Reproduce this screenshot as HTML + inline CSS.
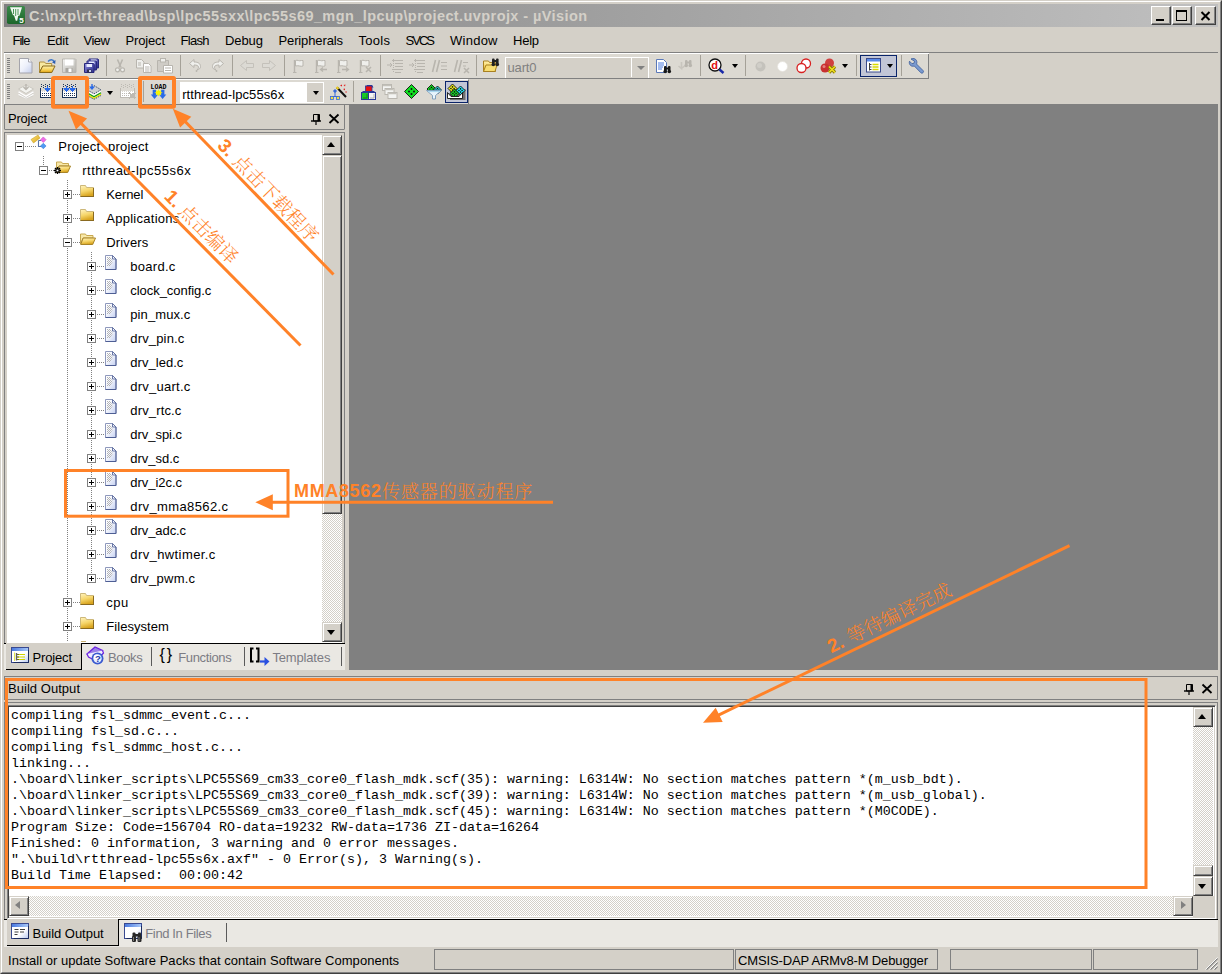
<!DOCTYPE html>
<html lang="en">
<head>
<meta charset="utf-8">
<title>µVision</title>
<style>
*{box-sizing:border-box;margin:0;padding:0}
html,body{width:1222px;height:974px;overflow:hidden;background:#d4d0c8}
body{position:relative;font-family:"Liberation Sans","Noto Sans CJK SC",sans-serif;font-size:13px;color:#000}
.abs,.t,.i{position:absolute}
.t{line-height:16px;white-space:nowrap}
svg{position:absolute;overflow:visible}
.vsep{position:absolute;width:1px;background:#a5a198}
.grip{position:absolute;width:3px;height:15px;background:repeating-linear-gradient(to bottom,#808080 0,#808080 1px,#dcd9d2 1px,#dcd9d2 2px)}
.btn{position:absolute;background:#d4d0c8;border-style:solid;border-width:1px;border-color:#fff #404040 #404040 #fff;box-shadow:inset -1px -1px 0 #808080}
.sbtn{position:absolute;background:#d4d0c8;border-style:solid;border-width:1px;border-color:#d4d0c8 #404040 #404040 #d4d0c8;box-shadow:inset 1px 1px 0 #fff, inset -1px -1px 0 #808080}
.checker{position:absolute;background-color:#fff;background-image:linear-gradient(45deg,#d4d0c8 25%,transparent 25%,transparent 75%,#d4d0c8 75%),linear-gradient(45deg,#d4d0c8 25%,transparent 25%,transparent 75%,#d4d0c8 75%);background-size:2px 2px;background-position:0 0,1px 1px}
.sunk{position:absolute;background:#fff;border-style:solid;border-width:1px;border-color:#808080 #fff #fff #808080;box-shadow:inset 1px 1px 0 #404040, inset -1px -1px 0 #d4d0c8}
.hdr{position:absolute;border:1px solid #808080}
.dotv{position:absolute;width:1px;background:repeating-linear-gradient(to bottom,#808080 0,#808080 1px,#fff 1px,#fff 2px)}
.doth{position:absolute;height:1px;background:repeating-linear-gradient(to right,#808080 0,#808080 1px,#fff 1px,#fff 2px)}
.xb{position:absolute;width:9px;height:9px;border:1px solid #808080;background:#fff}
.xb:before{content:"";position:absolute;left:1px;top:3px;width:5px;height:1px;background:#000}
.xb.p:after{content:"";position:absolute;left:3px;top:1px;width:1px;height:5px;background:#000}
.tabbar{position:absolute;background:#eae8e3}
.atab{position:absolute;background:#d4d0c8;border-right:1px solid #000;border-bottom:1px solid #000}
pre{position:absolute;font-family:"Liberation Mono",monospace;font-size:13.33px;line-height:16px;color:#000;white-space:pre}
.sbox{position:absolute;top:949px;height:21px;border:1px solid #808080}
.cn{font-family:"Noto Serif CJK SC","Noto Sans CJK SC",serif;font-weight:normal}
</style>
</head>
<body>

<div class="abs" style="left:0;top:0;width:1222px;height:974px;border-style:solid;border-width:1px;border-color:#d4d0c8 #404040 #404040 #d4d0c8"></div>
<div class="abs" style="left:1px;top:1px;width:1220px;height:972px;border-style:solid;border-width:1px;border-color:#fff #808080 #808080 #fff"></div>
<div class="abs" style="left:4px;top:4px;width:1214px;height:23px;background:linear-gradient(to right,#808080 0%,#c0c0c0 100%)">
<svg style="left:3px;top:2px" width="18" height="18" viewBox="0 0 18 18">
<defs><linearGradient id="kg" x1="0" y1="0" x2="0" y2="1"><stop offset="0" stop-color="#3c8a4a"/><stop offset="1" stop-color="#1c662a"/></linearGradient></defs>
<rect x="0" y="0" width="18" height="18" rx="1.8" fill="url(#kg)"/>
<path d="M3 1.3h12l-2.6 8.5h-1.2l-1 5h-1.4l-1.8-5.5h-1z" fill="#f2f8f2"/>
<path d="M6.5 3v5M8.7 3v7M11 3v6" stroke="#4a9858" stroke-width="1"/>
<text x="12.3" y="16.6" font-size="8" font-weight="bold" fill="#fff" font-family="Liberation Sans,sans-serif">5</text>
</svg>
<span class="t" style="left:25px;top:3.5px;font-size:14.5px;letter-spacing:0.414px;color:#d4d0c8;font-weight:bold;">C:\nxp\rt-thread\bsp\lpc55sxx\lpc55s69_mgn_lpcup\project.uvprojx - µVision</span>
<div class="btn" style="left:1147px;top:2px;width:20px;height:19px"><div class="abs" style="left:4px;top:12px;width:8px;height:2px;background:#000"></div></div>
<div class="btn" style="left:1168px;top:2px;width:20px;height:19px"><div class="abs" style="left:3px;top:3px;width:11px;height:11px;border:1px solid #000;border-top-width:2px"></div></div>
<div class="btn" style="left:1191px;top:2px;width:21px;height:19px"><svg style="left:4px;top:4px" width="11" height="10" viewBox="0 0 11 10"><path d="M1.5 1l8 8M9.5 1l-8 8" stroke="#000" stroke-width="2" fill="none"/></svg></div>
</div>
<span class="t" style="left:12.5px;top:33px;font-size:13px;letter-spacing:-0.982px;color:#000;">File</span>
<span class="t" style="left:47px;top:33px;font-size:13px;letter-spacing:-0.3px;color:#000;">Edit</span>
<span class="t" style="left:83.5px;top:33px;font-size:13px;letter-spacing:-0.481px;color:#000;">View</span>
<span class="t" style="left:125.5px;top:33px;font-size:13px;letter-spacing:-0.16px;color:#000;">Project</span>
<span class="t" style="left:180.5px;top:33px;font-size:13px;letter-spacing:-0.697px;color:#000;">Flash</span>
<span class="t" style="left:225px;top:33px;font-size:13px;letter-spacing:-0.076px;color:#000;">Debug</span>
<span class="t" style="left:278.5px;top:33px;font-size:13px;letter-spacing:-0.125px;color:#000;">Peripherals</span>
<span class="t" style="left:358.5px;top:33px;font-size:13px;letter-spacing:0.288px;color:#000;">Tools</span>
<span class="t" style="left:405.5px;top:33px;font-size:13px;letter-spacing:-1.968px;color:#000;">SVCS</span>
<span class="t" style="left:450px;top:33px;font-size:13px;letter-spacing:0.253px;color:#000;">Window</span>
<span class="t" style="left:513px;top:33px;font-size:13px;letter-spacing:-0.245px;color:#000;">Help</span>
<div class="abs" style="left:4px;top:52px;width:1214px;height:1px;background:#808080"></div>
<div class="abs" style="left:4px;top:53px;width:925px;height:1px;background:#fff"></div>
<div class="abs" style="left:4px;top:54px;width:925px;height:25px;background:#dcd9d2;border-right:1px solid #808080;border-bottom:1px solid #808080;border-left:1px solid #fff"></div>
<div class="abs" style="left:4px;top:79px;width:465px;height:25px;background:#dcd9d2;border-top:1px solid #fff;border-left:1px solid #fff;border-right:1px solid #808080"></div>
<div class="abs" style="left:4px;top:104px;width:1214px;height:1px;background:#808080"></div>
<div class="grip" style="left:7px;top:58px"></div><div class="grip" style="left:7px;top:84px"></div>
<div class="vsep" style="left:106px;top:55px;height:21px"></div>
<div class="vsep" style="left:180px;top:55px;height:21px"></div>
<div class="vsep" style="left:232px;top:55px;height:21px"></div>
<div class="vsep" style="left:284px;top:55px;height:21px"></div>
<div class="vsep" style="left:380px;top:55px;height:21px"></div>
<div class="vsep" style="left:476px;top:55px;height:21px"></div>
<div class="vsep" style="left:700px;top:55px;height:21px"></div>
<div class="vsep" style="left:745px;top:55px;height:21px"></div>
<div class="vsep" style="left:856px;top:55px;height:21px"></div>
<div class="vsep" style="left:901px;top:55px;height:21px"></div>
<div class="vsep" style="left:143px;top:81px;height:21px"></div>
<div class="vsep" style="left:353px;top:81px;height:21px"></div>
<svg width="0" height="0" style="left:0;top:0"><defs><linearGradient id="g_doc" x1="0" y1="0" x2="1" y2="1"><stop offset="0" stop-color="#fff"/><stop offset="0.5" stop-color="#eef1fb"/><stop offset="1" stop-color="#c3cdec"/></linearGradient><linearGradient id="g_fold" x1="0" y1="0" x2="0" y2="1"><stop offset="0" stop-color="#fff2b0"/><stop offset="0.6" stop-color="#f5cf55"/><stop offset="1" stop-color="#e0a010"/></linearGradient><linearGradient id="g_flop" x1="0" y1="0" x2="1" y2="1"><stop offset="0" stop-color="#8f8fe0"/><stop offset="1" stop-color="#2a2a8a"/></linearGradient><linearGradient id="g_gray" x1="0" y1="0" x2="1" y2="1"><stop offset="0" stop-color="#f4f4f2"/><stop offset="1" stop-color="#b4b2ac"/></linearGradient></defs></svg>
<svg style="left:19px;top:58px" width="14" height="16" viewBox="0 0 14 16" ><path d="M0.5 0.5h9l3.5 3.5v11h-12.5z" fill="url(#g_doc)" stroke="#a4a4ac"/><path d="M9.5 0.5v3.5h3.5" fill="#fff" stroke="#a4a4ac"/></svg>
<svg style="left:39px;top:58px" width="17" height="16" viewBox="0 0 17 16" ><path d="M0.5 4h5l1.2 1.5h6v3h-9l-3.2 5.5z" fill="#f8e9a0" stroke="#b09040"/><path d="M3.8 8h12.2l-3.2 6.5h-12.3z" fill="url(#g_fold)" stroke="#8a6a18"/><path d="M9 3.5c2-2.5 5-2.5 6.5 0.5" fill="none" stroke="#3f78c8" stroke-width="1.4"/><path d="M16.5 2l-0.3 4-3.2-1.8z" fill="#2a5cb0"/></svg>
<svg style="left:62px;top:58px" width="15" height="16" viewBox="0 0 15 16" ><path d="M0.5 1h13l0.5 0.5v13h-13.5z" fill="url(#g_gray)" stroke="#b8b6b0"/><rect x="3" y="1.5" width="8.5" height="6" fill="#fff"/><rect x="3.5" y="10" width="7" height="4.5" fill="#a8a6a0"/><rect x="6.5" y="10.5" width="3" height="3.5" fill="#fff"/></svg>
<svg style="left:84px;top:58px" width="15" height="16" viewBox="0 0 15 16" ><g transform="translate(4.5,0.5)"><path d="M0.5 0.5h9l0.5 0.5v8.5h-9.5z" fill="url(#g_flop)" stroke="#28287c"/><rect x="2.5" y="1" width="5.5" height="3" fill="#e8ecff"/><rect x="3" y="6.5" width="4.5" height="3" fill="#303050"/><rect x="5" y="7" width="2" height="2" fill="#c8d0f0"/></g><g transform="translate(2.5,2.5)"><path d="M0.5 0.5h9l0.5 0.5v8.5h-9.5z" fill="url(#g_flop)" stroke="#28287c"/><rect x="2.5" y="1" width="5.5" height="3" fill="#e8ecff"/><rect x="3" y="6.5" width="4.5" height="3" fill="#303050"/><rect x="5" y="7" width="2" height="2" fill="#c8d0f0"/></g><g transform="translate(0,5)"><path d="M0.5 0.5h9l0.5 0.5v8.5h-9.5z" fill="url(#g_flop)" stroke="#28287c"/><rect x="2.5" y="1" width="5.5" height="3" fill="#e8ecff"/><rect x="3" y="6.5" width="4.5" height="3" fill="#303050"/><rect x="5" y="7" width="2" height="2" fill="#c8d0f0"/></g></svg>
<svg style="left:115px;top:59px" width="10" height="14" viewBox="0 0 10 14" ><path d="M2.5 0.5l3.5 8M7.5 0.5l-3.5 8" stroke="#b8b5ae" stroke-width="1.6" fill="none"/><circle cx="2.5" cy="10.8" r="2" fill="#efefec" stroke="#b8b5ae" stroke-width="1.2"/><circle cx="7.5" cy="10.8" r="2" fill="#efefec" stroke="#b8b5ae" stroke-width="1.2"/></svg>
<svg style="left:136px;top:59px" width="16" height="14" viewBox="0 0 16 14" ><path d="M0.5 0.5h5l2.5 2.5v6h-7.5z" fill="#efefec" stroke="#b8b5ae"/><path d="M7.5 4.5h5l2.5 2.5v6.5h-7.5z" fill="#ffffff" stroke="#b8b5ae"/><path d="M9 8h4.5M9 10h4.5M9 12h4.5M2 4h3M2 6h3" stroke="#b8b5ae"/></svg>
<svg style="left:157px;top:58px" width="16" height="16" viewBox="0 0 16 16" ><path d="M0.5 2.5h11v11h-11z" fill="#cfccc6" stroke="#b8b5ae"/><rect x="3.5" y="0.5" width="5" height="3.5" fill="#efefec" stroke="#b8b5ae"/><path d="M6.5 7.5h9v7.5h-9z" fill="#ffffff" stroke="#b8b5ae"/><path d="M8 10h6M8 12.5h6" stroke="#b8b5ae"/></svg>
<svg style="left:189px;top:59px" width="13" height="13" viewBox="0 0 13 13" ><path d="M0.5 4.5l4.5-4v2.5c4 0 6.5 1.5 6.5 4.5 0 2-1.5 3-3.5 3.5 1-0.8 1.5-1.8 1.5-2.8 0-1.7-2-2.2-4.5-2.2v2.5z" fill="#efefec" stroke="#b8b5ae"/><circle cx="7.5" cy="12" r="0.9" fill="#b8b5ae"/></svg>
<svg style="left:211px;top:59px" width="13" height="13" viewBox="0 0 13 13" ><path d="M12.5 4.5l-4.5-4v2.5c-4 0-6.5 1.5-6.5 4.5 0 2 1.5 3 3.5 3.5-1-0.8-1.5-1.8-1.5-2.8 0-1.7 2-2.2 4.5-2.2v2.5z" fill="#efefec" stroke="#b8b5ae"/><circle cx="5.5" cy="12" r="0.9" fill="#b8b5ae"/></svg>
<svg style="left:240px;top:60px" width="14" height="11" viewBox="0 0 14 11" ><path d="M0.5 5.5l6-5v3h7v4h-7v3z" fill="#dcdad4" stroke="#c4c1ba"/></svg>
<svg style="left:262px;top:60px" width="14" height="11" viewBox="0 0 14 11" ><path d="M13.5 5.5l-6-5v3h-7v4h7v3z" fill="#dcdad4" stroke="#c4c1ba"/></svg>
<svg style="left:291px;top:59px" width="16" height="14" viewBox="0 0 16 14" ><path d="M3.5 1v12" stroke="#b8b5ae" stroke-width="1.4"/><path d="M4.5 1.5c2-1 3.5 1 6 0l1.5 0v5.5c-2.5 1-4-1-7.5 0z" fill="#efefec" stroke="#b8b5ae"/><path d="M2 13.5h3.5" stroke="#b8b5ae"/></svg>
<svg style="left:313px;top:59px" width="16" height="14" viewBox="0 0 16 14" ><path d="M3.5 1v12" stroke="#b8b5ae" stroke-width="1.4"/><path d="M4.5 1.5c2-1 3.5 1 6 0l1.5 0v5.5c-2.5 1-4-1-7.5 0z" fill="#efefec" stroke="#b8b5ae"/><path d="M2 13.5h3.5" stroke="#b8b5ae"/><path d="M14 10.5h-6m2-2l-2.5 2 2.5 2" stroke="#b8b5ae" stroke-width="1.3" fill="none"/></svg>
<svg style="left:335px;top:59px" width="16" height="14" viewBox="0 0 16 14" ><path d="M3.5 1v12" stroke="#b8b5ae" stroke-width="1.4"/><path d="M4.5 1.5c2-1 3.5 1 6 0l1.5 0v5.5c-2.5 1-4-1-7.5 0z" fill="#efefec" stroke="#b8b5ae"/><path d="M2 13.5h3.5" stroke="#b8b5ae"/><path d="M7 10.5h6m-2-2l2.5 2-2.5 2" stroke="#b8b5ae" stroke-width="1.3" fill="none"/></svg>
<svg style="left:357px;top:59px" width="16" height="14" viewBox="0 0 16 14" ><path d="M3.5 1v12" stroke="#b8b5ae" stroke-width="1.4"/><path d="M4.5 1.5c2-1 3.5 1 6 0l1.5 0v5.5c-2.5 1-4-1-7.5 0z" fill="#efefec" stroke="#b8b5ae"/><path d="M2 13.5h3.5" stroke="#b8b5ae"/><path d="M9 8l5 5M14 8l-5 5" stroke="#b8b5ae" stroke-width="1.5" fill="none"/></svg>
<svg style="left:387px;top:59px" width="17" height="14" viewBox="0 0 17 14" ><path d="M5 1.5h11M8 4.5h8M8 7.5h8M5 10.5h11M8 13.5h6" stroke="#b8b5ae" stroke-width="1.2"/><path d="M6.5 0v14" stroke="#b8b5ae" stroke-dasharray="1 1"/><path d="M0 6h5m-2-2l2 2-2 2" stroke="#b8b5ae" fill="none"/></svg>
<svg style="left:409px;top:59px" width="17" height="14" viewBox="0 0 17 14" ><path d="M5 1.5h11M8 4.5h8M8 7.5h8M5 10.5h11M8 13.5h6" stroke="#b8b5ae" stroke-width="1.2"/><path d="M6.5 0v14" stroke="#b8b5ae" stroke-dasharray="1 1"/><path d="M0 6h5m-2-2l2 2-2 2" stroke="#b8b5ae" fill="none"/></svg>
<svg style="left:432px;top:60px" width="15" height="12" viewBox="0 0 15 12" ><path d="M3.5 0l-3 12M7.5 0l-3 12" stroke="#b8b5ae" stroke-width="1.6"/><path d="M9 2.5h6M9 6h6M9 9.5h6" stroke="#b8b5ae" stroke-width="1.2"/></svg>
<svg style="left:454px;top:60px" width="16" height="13" viewBox="0 0 16 13" ><path d="M3.5 0l-3 12M7.5 0l-3 12" stroke="#b8b5ae" stroke-width="1.6"/><path d="M9 2.5h5M9 6h3" stroke="#b8b5ae" stroke-width="1.2"/><path d="M10 8l5 5M15 8l-5 5" stroke="#b8b5ae" stroke-width="1.5"/></svg>
<svg style="left:483px;top:58px" width="17" height="15" viewBox="0 0 17 15" ><path d="M0.5 3h5l1 1.5h6v9h-12z" fill="url(#g_fold)" stroke="#a88020"/><path d="M3 7h11l-2 6.5h-11.5z" fill="#f7dc70" stroke="#a88020"/><g fill="#202020"><rect x="9" y="0.5" width="2.6" height="5.5" rx="1"/><rect x="13" y="0.5" width="2.6" height="5.5" rx="1"/><rect x="11" y="2" width="2.5" height="2"/><circle cx="10.3" cy="6.5" r="1.8"/><circle cx="14.3" cy="6.5" r="1.8"/></g></svg>
<svg style="left:656px;top:59px" width="16" height="15" viewBox="0 0 16 15" ><path d="M0.5 0.5h7l3 3v10h-10z" fill="#fff" stroke="#5a78b8"/><path d="M2 4h6M2 6h6M2 8h5M2 10h4" stroke="#4a7ae0" stroke-width="1"/><g fill="#181818"><rect x="8" y="7" width="2.5" height="5" rx="1"/><rect x="12" y="7" width="2.5" height="5" rx="1"/><rect x="10" y="8.5" width="2.5" height="2"/><circle cx="9.2" cy="12.5" r="1.8"/><circle cx="13.3" cy="12.5" r="1.8"/></g></svg>
<svg style="left:678px;top:59px" width="15" height="14" viewBox="0 0 15 14" ><path d="M3.5 3v6.5l-3-2.5m3 2.5l3-2.5" stroke="#c8c5be" stroke-width="1.6" fill="none"/><g fill="#b8b5ae"><rect x="7" y="1" width="2.5" height="5" rx="1"/><rect x="11" y="1" width="2.5" height="5" rx="1"/><rect x="9" y="2.5" width="2.5" height="2"/><circle cx="8.2" cy="6.5" r="1.8"/><circle cx="12.3" cy="6.5" r="1.8"/></g></svg>
<svg style="left:708px;top:58px" width="17" height="16" viewBox="0 0 17 16" ><circle cx="7" cy="7" r="6" fill="#fff" stroke="#101010" stroke-width="1.3"/><path d="M11.5 11.5l4 3.5" stroke="#1828a8" stroke-width="2.4"/><text x="3.2" y="11" font-size="11" font-weight="bold" fill="#e01010" font-family="Liberation Sans,sans-serif">d</text></svg>
<div class="abs" style="left:732px;top:64px;width:0;height:0;border-style:solid;border-width:4px 3.5px 0 3.5px;border-color:#000 transparent transparent transparent"></div>
<svg style="left:755px;top:61px" width="11" height="11" viewBox="0 0 11 11" ><circle cx="5.5" cy="5.5" r="5" fill="#c4c2bc"/><circle cx="4.5" cy="4.5" r="2.5" fill="#d0cec8"/></svg>
<svg style="left:777px;top:61px" width="11" height="11" viewBox="0 0 11 11" ><circle cx="5.5" cy="5.5" r="5" fill="#fff" stroke="#e4e2dc" stroke-width="0.8"/></svg>
<svg style="left:796px;top:58px" width="16" height="16" viewBox="0 0 16 16" ><circle cx="10" cy="5.5" r="4.5" fill="#fff" stroke="#d82020" stroke-width="1.3"/><circle cx="5.5" cy="10" r="4.5" fill="#fff" stroke="#d82020" stroke-width="1.3"/></svg>
<svg style="left:820px;top:58px" width="17" height="16" viewBox="0 0 17 16" ><circle cx="9.5" cy="5" r="4.5" fill="#d04040"/><circle cx="5" cy="10" r="4.5" fill="#c83030"/><circle cx="4" cy="8.5" r="1.5" fill="#e88080"/><path d="M9 8.5l6 6M15 8.5l-6 6" stroke="#8a7a00" stroke-width="3.2"/><path d="M9 8.5l6 6M15 8.5l-6 6" stroke="#f0e020" stroke-width="1.6"/></svg>
<div class="abs" style="left:842px;top:64px;width:0;height:0;border-style:solid;border-width:4px 3.5px 0 3.5px;border-color:#000 transparent transparent transparent"></div>
<div class="abs" style="left:860px;top:55px;width:37px;height:22px;background:#c2c6d6;border:1px solid #0a246a"></div>
<svg style="left:866px;top:58px" width="15" height="15" viewBox="0 0 15 15" ><rect x="0.5" y="0.5" width="14" height="13.5" fill="#fff" stroke="#3a4a8a"/><rect x="1" y="1" width="13" height="2.5" fill="#5a8ae8"/><path d="M3.5 5v7.5M3.5 6.5h2M3.5 9h2M3.5 11.5h2" stroke="#404040" fill="none"/><path d="M6.5 6.5h6M6.5 9h6M6.5 11.5h6" stroke="#d8d800" stroke-width="1.6"/></svg>
<div class="abs" style="left:887px;top:64px;width:0;height:0;border-style:solid;border-width:4px 3.5px 0 3.5px;border-color:#000 transparent transparent transparent"></div>
<svg style="left:909px;top:58px" width="15" height="16" viewBox="0 0 15 16" ><path d="M2 1c2-1 4.5-0.5 5.5 1.5 0.6 1.3 0.4 2.5 0 3.5l6.5 6.5c0.8 0.8 0.5 1.7 0 2.2s-1.5 0.7-2.2 0l-6.5-6.7c-1.5 0.5-3 0.3-4-0.8-1-1.2-1.3-2.5-0.8-4l2.5 2.5 2-0.5 0.5-2z" fill="#7a9ad0" stroke="#3a5a98" stroke-width="0.8"/></svg>
<svg style="left:18px;top:84px" width="16" height="15" viewBox="0 0 16 15" ><path d="M8 1l7.5 4-7.5 4.5-7.5-4.5z" fill="#f4f4f0" stroke="#c4c1ba" stroke-width="0.8"/><path d="M0.5 8l7.5 4.5 7.5-4.5M0.5 10.5l7.5 4 7.5-4" fill="none" stroke="#fff" stroke-width="1.6"/><path d="M0.5 9l7.5 4.5 7.5-4.5M0.5 11.5l7.5 3.5 7.5-3.5" fill="none" stroke="#c4c1ba" stroke-width="0.7"/><path d="M8 0v5m-2.5-2l2.5 2.5 2.5-2.5" stroke="#bab7b0" stroke-width="1.5" fill="none"/></svg>
<svg style="left:40px;top:84px" width="16" height="15" viewBox="0 0 16 15" shape-rendering="crispEdges"><rect x="1" y="0" width="1" height="1" fill="#1c3458"/><rect x="1" y="2" width="1" height="1" fill="#1c3458"/><rect x="5" y="0" width="1" height="1" fill="#1c3458"/><rect x="5" y="2" width="1" height="1" fill="#1c3458"/><rect x="9" y="0" width="1" height="1" fill="#1c3458"/><rect x="9" y="2" width="1" height="1" fill="#1c3458"/><rect x="13" y="0" width="1" height="1" fill="#1c3458"/><rect x="13" y="2" width="1" height="1" fill="#1c3458"/><rect x="3" y="1" width="1" height="1" fill="#1c3458"/><rect x="7" y="1" width="1" height="1" fill="#1c3458"/><rect x="11" y="1" width="1" height="1" fill="#1c3458"/><rect x="3" y="3" width="1" height="1" fill="#1c3458"/><rect x="11" y="3" width="1" height="1" fill="#1c3458"/><rect x="0" y="4" width="1" height="10" fill="#1c3458"/><rect x="14" y="4" width="1" height="10" fill="#1c3458"/><rect x="0" y="13" width="15" height="1" fill="#1c3458"/><rect x="1" y="8" width="13" height="5" fill="#fff"/><rect x="1" y="7" width="1" height="1" fill="#fff"/><rect x="3" y="7" width="1" height="1" fill="#fff"/><rect x="5" y="7" width="1" height="1" fill="#fff"/><rect x="7" y="7" width="1" height="1" fill="#fff"/><rect x="9" y="7" width="1" height="1" fill="#fff"/><rect x="11" y="7" width="1" height="1" fill="#fff"/><rect x="13" y="7" width="1" height="1" fill="#fff"/><rect x="2" y="9" width="1" height="1" fill="#1c3458"/><rect x="4" y="9" width="1" height="1" fill="#1c3458"/><rect x="6" y="9" width="1" height="1" fill="#1c3458"/><rect x="8" y="9" width="1" height="1" fill="#1c3458"/><rect x="10" y="9" width="1" height="1" fill="#1c3458"/><rect x="12" y="9" width="1" height="1" fill="#1c3458"/><rect x="2" y="11" width="1" height="1" fill="#1c3458"/><rect x="4" y="11" width="1" height="1" fill="#1c3458"/><rect x="6" y="11" width="1" height="1" fill="#1c3458"/><rect x="8" y="11" width="1" height="1" fill="#1c3458"/><rect x="10" y="11" width="1" height="1" fill="#1c3458"/><rect x="12" y="11" width="1" height="1" fill="#1c3458"/><rect x="7" y="2" width="1" height="4" fill="#2a6ae8"/><rect x="5" y="5" width="5" height="1" fill="#2a6ae8"/><rect x="6" y="6" width="3" height="1" fill="#2a6ae8"/><rect x="7" y="7" width="1" height="1" fill="#2a6ae8"/><rect x="4" y="4" width="1" height="1" fill="#7aa8f4"/><rect x="10" y="4" width="1" height="1" fill="#7aa8f4"/><rect x="5" y="4" width="2" height="1" fill="#2a6ae8"/><rect x="8" y="4" width="2" height="1" fill="#2a6ae8"/></svg>
<svg style="left:62px;top:84px" width="16" height="15" viewBox="0 0 16 15" shape-rendering="crispEdges"><rect x="1" y="0" width="1" height="1" fill="#1c3458"/><rect x="1" y="2" width="1" height="1" fill="#1c3458"/><rect x="5" y="0" width="1" height="1" fill="#1c3458"/><rect x="5" y="2" width="1" height="1" fill="#1c3458"/><rect x="9" y="0" width="1" height="1" fill="#1c3458"/><rect x="9" y="2" width="1" height="1" fill="#1c3458"/><rect x="13" y="0" width="1" height="1" fill="#1c3458"/><rect x="13" y="2" width="1" height="1" fill="#1c3458"/><rect x="3" y="1" width="1" height="1" fill="#1c3458"/><rect x="7" y="1" width="1" height="1" fill="#1c3458"/><rect x="11" y="1" width="1" height="1" fill="#1c3458"/><rect x="7" y="3" width="1" height="1" fill="#1c3458"/><rect x="0" y="4" width="1" height="10" fill="#1c3458"/><rect x="14" y="4" width="1" height="10" fill="#1c3458"/><rect x="0" y="13" width="15" height="1" fill="#1c3458"/><rect x="1" y="8" width="13" height="5" fill="#fff"/><rect x="1" y="7" width="1" height="1" fill="#fff"/><rect x="3" y="7" width="1" height="1" fill="#fff"/><rect x="5" y="7" width="1" height="1" fill="#fff"/><rect x="7" y="7" width="1" height="1" fill="#fff"/><rect x="9" y="7" width="1" height="1" fill="#fff"/><rect x="11" y="7" width="1" height="1" fill="#fff"/><rect x="13" y="7" width="1" height="1" fill="#fff"/><rect x="2" y="9" width="1" height="1" fill="#1c3458"/><rect x="4" y="9" width="1" height="1" fill="#1c3458"/><rect x="6" y="9" width="1" height="1" fill="#1c3458"/><rect x="8" y="9" width="1" height="1" fill="#1c3458"/><rect x="10" y="9" width="1" height="1" fill="#1c3458"/><rect x="12" y="9" width="1" height="1" fill="#1c3458"/><rect x="2" y="11" width="1" height="1" fill="#1c3458"/><rect x="4" y="11" width="1" height="1" fill="#1c3458"/><rect x="6" y="11" width="1" height="1" fill="#1c3458"/><rect x="8" y="11" width="1" height="1" fill="#1c3458"/><rect x="10" y="11" width="1" height="1" fill="#1c3458"/><rect x="12" y="11" width="1" height="1" fill="#1c3458"/><rect x="4" y="2" width="1" height="4" fill="#2a6ae8"/><rect x="2" y="5" width="5" height="1" fill="#2a6ae8"/><rect x="3" y="6" width="3" height="1" fill="#2a6ae8"/><rect x="4" y="7" width="1" height="1" fill="#2a6ae8"/><rect x="1" y="4" width="1" height="1" fill="#7aa8f4"/><rect x="7" y="4" width="1" height="1" fill="#7aa8f4"/><rect x="2" y="4" width="2" height="1" fill="#2a6ae8"/><rect x="5" y="4" width="2" height="1" fill="#2a6ae8"/><rect x="10" y="2" width="1" height="4" fill="#2a6ae8"/><rect x="8" y="5" width="5" height="1" fill="#2a6ae8"/><rect x="9" y="6" width="3" height="1" fill="#2a6ae8"/><rect x="10" y="7" width="1" height="1" fill="#2a6ae8"/><rect x="7" y="4" width="1" height="1" fill="#7aa8f4"/><rect x="13" y="4" width="1" height="1" fill="#7aa8f4"/><rect x="8" y="4" width="2" height="1" fill="#2a6ae8"/><rect x="11" y="4" width="2" height="1" fill="#2a6ae8"/></svg>
<svg style="left:86px;top:84px" width="16" height="15" viewBox="0 0 16 15" ><path d="M8 1.5l7 4.3-7 4-7-4z" fill="#cfcfcf" stroke="#1c3458" stroke-width="0.8" stroke-dasharray="1.5 1"/><path d="M1 7.3l7 4 7-4" fill="none" stroke="#fff" stroke-width="1.3"/><path d="M1 8.8l7 4 7-4" fill="none" stroke="#10a010" stroke-width="1.3"/><path d="M1 10.3l7 4 7-4" fill="none" stroke="#e8e800" stroke-width="1.3"/><path d="M1 11.5l7 3.8 7-3.8" fill="none" stroke="#1c3458" stroke-width="0.8" stroke-dasharray="1.5 1"/><path d="M6 0v4" stroke="#2a6ae8" stroke-width="1.4"/><path d="M3 2.5h6l-3 3.5z" fill="#2a6ae8"/></svg>
<div class="abs" style="left:107px;top:90.5px;width:0;height:0;border-style:solid;border-width:4px 3.5px 0 3.5px;border-color:#000 transparent transparent transparent"></div>
<svg style="left:120px;top:84px" width="16" height="15" viewBox="0 0 16 15" shape-rendering="crispEdges"><rect x="1" y="0" width="1" height="1" fill="#bdbab3"/><rect x="1" y="2" width="1" height="1" fill="#bdbab3"/><rect x="5" y="0" width="1" height="1" fill="#bdbab3"/><rect x="5" y="2" width="1" height="1" fill="#bdbab3"/><rect x="9" y="0" width="1" height="1" fill="#bdbab3"/><rect x="9" y="2" width="1" height="1" fill="#bdbab3"/><rect x="13" y="0" width="1" height="1" fill="#bdbab3"/><rect x="13" y="2" width="1" height="1" fill="#bdbab3"/><rect x="3" y="1" width="1" height="1" fill="#bdbab3"/><rect x="7" y="1" width="1" height="1" fill="#bdbab3"/><rect x="11" y="1" width="1" height="1" fill="#bdbab3"/><rect x="3" y="3" width="1" height="1" fill="#bdbab3"/><rect x="7" y="3" width="1" height="1" fill="#bdbab3"/><rect x="11" y="3" width="1" height="1" fill="#bdbab3"/><rect x="0" y="4" width="1" height="10" fill="#bdbab3"/><rect x="14" y="4" width="1" height="10" fill="#bdbab3"/><rect x="0" y="13" width="15" height="1" fill="#bdbab3"/><rect x="1" y="8" width="13" height="5" fill="#fff"/><rect x="1" y="7" width="1" height="1" fill="#fff"/><rect x="3" y="7" width="1" height="1" fill="#fff"/><rect x="5" y="7" width="1" height="1" fill="#fff"/><rect x="7" y="7" width="1" height="1" fill="#fff"/><rect x="9" y="7" width="1" height="1" fill="#fff"/><rect x="11" y="7" width="1" height="1" fill="#fff"/><rect x="13" y="7" width="1" height="1" fill="#fff"/><rect x="2" y="9" width="1" height="1" fill="#bdbab3"/><rect x="4" y="9" width="1" height="1" fill="#bdbab3"/><rect x="6" y="9" width="1" height="1" fill="#bdbab3"/><rect x="8" y="9" width="1" height="1" fill="#bdbab3"/><rect x="10" y="9" width="1" height="1" fill="#bdbab3"/><rect x="12" y="9" width="1" height="1" fill="#bdbab3"/><rect x="2" y="11" width="1" height="1" fill="#bdbab3"/><rect x="4" y="11" width="1" height="1" fill="#bdbab3"/><rect x="6" y="11" width="1" height="1" fill="#bdbab3"/><rect x="8" y="11" width="1" height="1" fill="#bdbab3"/><rect x="10" y="11" width="1" height="1" fill="#bdbab3"/><rect x="12" y="11" width="1" height="1" fill="#bdbab3"/><path d="M9 8.5l6.5 6M15.5 8.5l-6.5 6" stroke="#bdbab3" stroke-width="1.8"/></svg>
<svg style="left:150px;top:83px" width="17" height="17" viewBox="0 0 17 17" ><text x="0.6" y="5.7" font-size="6.6" font-weight="bold" fill="#000" font-family="Liberation Mono,monospace">LOAD</text><path d="M2.7 6.8h3.3v4.7h2.2l-3.7 4.5-3.7-4.5h1.9z" fill="#2a6ae8"/><path d="M11.1 6.8h3.3v4.7h1.9l-3.7 4.5-3.7-4.5h2.2z" fill="#2a6ae8"/><path d="M8.5 6l0.9 2 1.9-1-0.7 2.1 2.1 0.7-2.1 0.7 0.7 2.1-1.9-1-0.9 2-0.9-2-1.9 1 0.7-2.1-2.1-0.7 2.1-0.7-0.7-2.1 1.9 1z" fill="#f4f400"/></svg>
<svg style="left:330px;top:83.5px" width="17" height="16" viewBox="0 0 17 16" ><path d="M5 8v3M2 14v-1.5h6v1.5M5 11v1.5" stroke="#3a6ad8" fill="none"/><rect x="3.5" y="5.5" width="3" height="3" transform="rotate(45 5 7)" fill="#3a6ad8"/><rect x="0.5" y="12.5" width="3" height="3" fill="#f0e040" stroke="#3a6ad8" stroke-width="0.8"/><rect x="6.5" y="12.5" width="3" height="3" fill="#f0e040" stroke="#3a6ad8" stroke-width="0.8"/><path d="M7 3.5l9 9.5" stroke="#101010" stroke-width="2"/><path d="M6.5 3l2 2" stroke="#f0d020" stroke-width="2.2"/><g fill="#e02020"><path d="M10 1.5l2-1v2z"/><path d="M13.5 1l2-0.5-0.5 2z"/><path d="M13 5l2-0.5v2z"/><path d="M15 8l1.5-1v2z"/></g></svg>
<svg style="left:361px;top:83.5px" width="15" height="16" viewBox="0 0 15 16" ><path d="M4.5 3.5l1.5-2.5h5l1.5 2.5z" fill="#283898"/><rect x="4.5" y="2" width="6.5" height="6" fill="#e81010" stroke="#283898" stroke-width="0.8"/><path d="M0.5 8.5l1.5-1.5h11l1.5 1.5z" fill="#283898"/><rect x="0.5" y="8.5" width="7" height="7" fill="#18c828" stroke="#283898"/><rect x="7.5" y="8.5" width="7" height="7" fill="#f4f4f4" stroke="#283898"/><path d="M2 14h4v-4" stroke="#0a8a18" fill="none"/><path d="M9 14h4v-4" stroke="#b0b0b0" fill="none"/></svg>
<svg style="left:382px;top:84px" width="16" height="15" viewBox="0 0 16 15" ><g fill="#f4f4f2" stroke="#bab7b0"><rect x="0.5" y="0.5" width="9" height="6"/><rect x="3" y="4.5" width="9" height="6"/><rect x="6" y="8.5" width="9" height="6"/></g><path d="M1 1.5h8M3.5 5.5h8M6.5 9.5h8" stroke="#c4c1ba" stroke-width="1.4"/></svg>
<svg style="left:404px;top:84px" width="16" height="16" viewBox="0 0 16 16" ><path d="M7.5 0.5l7 7-7 7-7-7z" fill="#10e020" stroke="#101010" stroke-width="0.9"/><circle cx="7.5" cy="5" r="0.98" fill="#101010"/><circle cx="10" cy="7.5" r="0.98" fill="#101010"/><circle cx="7.5" cy="10" r="0.98" fill="#101010"/><circle cx="5" cy="7.5" r="0.98" fill="#101010"/></svg>
<svg style="left:426px;top:84px" width="16" height="16" viewBox="0 0 16 16" ><path d="M5.5 0.5l4.5 4.5-4.5 4.5-4.5-4.5z" fill="#10e020" stroke="#101010" stroke-width="0.9"/><circle cx="5.5" cy="3.4" r="0.8" fill="#101010"/><circle cx="7.1" cy="5" r="0.8" fill="#101010"/><circle cx="5.5" cy="6.6" r="0.8" fill="#101010"/><circle cx="3.9" cy="5" r="0.8" fill="#101010"/><path d="M11.5 2l4 4-4 4-4-4z" fill="#30e0f0" stroke="#101010" stroke-width="0.9"/><circle cx="11.5" cy="4.6" r="0.8" fill="#101010"/><circle cx="12.9" cy="6" r="0.8" fill="#101010"/><circle cx="11.5" cy="7.4" r="0.8" fill="#101010"/><circle cx="10.1" cy="6" r="0.8" fill="#101010"/><path d="M0.5 6.5h15l-6 5v3.5h-3v-3.5z" fill="#e8f4fc" stroke="#7898b8" stroke-width="0.9"/><path d="M2 7.5h12" stroke="#a8d8f0" stroke-width="1.2"/></svg>
<div class="abs" style="left:445px;top:81px;width:23px;height:22px;background:#c2c6d6;border:1px solid #0a246a"></div>
<svg style="left:447px;top:83px" width="19" height="18" viewBox="0 0 19 18" ><rect x="3" y="6" width="15.5" height="11" fill="#707070"/><path d="M5.5 1l4.5 4.5-4.5 4.5-4.5-4.5z" fill="#f0f020" stroke="#101010" stroke-width="0.9"/><circle cx="5.5" cy="3.9" r="0.8" fill="#101010"/><circle cx="7.1" cy="5.5" r="0.8" fill="#101010"/><circle cx="5.5" cy="7.1" r="0.8" fill="#101010"/><circle cx="3.9" cy="5.5" r="0.8" fill="#101010"/><path d="M13.5 3l4.5 4.5-4.5 4.5-4.5-4.5z" fill="#20e8f8" stroke="#101010" stroke-width="0.9"/><circle cx="13.5" cy="5.9" r="0.8" fill="#101010"/><circle cx="15.1" cy="7.5" r="0.8" fill="#101010"/><circle cx="13.5" cy="9.1" r="0.8" fill="#101010"/><circle cx="11.9" cy="7.5" r="0.8" fill="#101010"/><path d="M7.5 6l4.5 4.5-4.5 4.5-4.5-4.5z" fill="#18d828" stroke="#101010" stroke-width="0.9"/><circle cx="7.5" cy="8.9" r="0.8" fill="#101010"/><circle cx="9.1" cy="10.5" r="0.8" fill="#101010"/><circle cx="7.5" cy="12.1" r="0.8" fill="#101010"/><circle cx="5.9" cy="10.5" r="0.8" fill="#101010"/><path d="M0.5 9.5l3.5 4h8l3.5-4v6h-15z" fill="#fff" stroke="#101010" stroke-width="0.9"/></svg>
<div class="abs" style="left:505px;top:57px;width:144px;height:21px;background:#d4d0c8;border:1px solid #fff;border-bottom:none"><div class="abs" style="left:125px;top:0;width:1px;height:19px;background:#fff"></div><div class="abs" style="left:131px;top:8px;width:0;height:0;border-style:solid;border-width:4px 4px 0 4px;border-color:#808080 transparent transparent transparent"></div></div>
<span class="t" style="left:507.5px;top:60px;font-size:13px;letter-spacing:-0.157px;color:#808080;">uart0</span>
<div class="abs" style="left:180px;top:82px;width:144px;height:21px;background:#fff;border:1px solid #fff"><div class="abs" style="left:126px;top:0;width:16px;height:19px;background:#d4d0c8"></div><div class="abs" style="left:132px;top:8px;width:0;height:0;border-style:solid;border-width:4px 3.5px 0 3.5px;border-color:#000 transparent transparent transparent"></div></div>
<span class="t" style="left:182.2px;top:86.5px;font-size:13px;letter-spacing:0.098px;color:#000;">rtthread-lpc55s6x</span>
<div class="abs" style="left:349px;top:105px;width:869px;height:565px;background:#808080"></div>
<div class="hdr" style="left:4px;top:104px;width:341px;height:26px;border-radius:1px"></div>
<span class="t" style="left:8px;top:111px;font-size:13px;letter-spacing:-0.243px;color:#000;">Project</span>
<svg style="left:311px;top:113.8px" width="28" height="11" viewBox="0 0 28 11" ><path d="M2.5 0.5h6v6.5h-6z" fill="none" stroke="#000" stroke-width="1"/><path d="M7.5 0.5v6.5" stroke="#000" stroke-width="2"/><path d="M0 7h10" stroke="#000" stroke-width="1.4"/><path d="M5 7.5v3.5" stroke="#000" stroke-width="1.2"/><path d="M18.5 0.5l9 8.5M27.5 0.5l-9 8.5" stroke="#000" stroke-width="1.8" fill="none"/></svg>
<div class="abs" style="left:4px;top:132px;width:341px;height:512px;border:1px solid #808080;border-bottom:none"></div><div class="abs" style="left:7px;top:135px;width:335px;height:508px;background:#fff"></div>
<div class="checker" style="left:322px;top:135px;width:20px;height:507px"></div>
<div class="sbtn" style="left:322px;top:135px;width:20px;height:20px"><div class="abs" style="left:4px;top:6px;width:0;height:0;border-style:solid;border-width:0 4.5px 5px 4.5px;border-color:transparent transparent #000 transparent"></div></div>
<div class="sbtn" style="left:322px;top:155px;width:20px;height:359px"></div>
<div class="sbtn" style="left:322px;top:622px;width:20px;height:20px"><div class="abs" style="left:4px;top:7px;width:0;height:0;border-style:solid;border-width:5px 4.5px 0 4.5px;border-color:#000 transparent transparent transparent"></div></div>
<div class="dotv" style="left:43px;top:156px;height:10px"></div>
<div class="dotv" style="left:67px;top:180px;height:462px"></div>
<div class="dotv" style="left:91px;top:252px;height:326px"></div>
<div class="doth" style="left:25px;top:146px;width:11px"></div>
<div class="xb" style="left:15px;top:142px"></div>
<svg style="left:31px;top:135px" width="16" height="15" viewBox="0 0 16 15">
<defs><linearGradient id="pjy" x1="0" y1="0" x2="1" y2="1"><stop offset="0" stop-color="#ffe680"/><stop offset="1" stop-color="#d8a010"/></linearGradient></defs>
<path d="M0 4.5l7-4.5 2 3-6.5 5z" fill="url(#pjy)" stroke="#c09818" stroke-width="0.5"/>
<path d="M7.5 5.5v6h3M7.5 5.5h2.5" fill="none" stroke="#5a74a8" stroke-width="1.1"/>
<path d="M9.5 4.7l2.8-2.8 2.8 2.8-2.8 2.8z" fill="#f06ce8" stroke="#c040c0" stroke-width="0.5"/>
<path d="M9.5 11l2.8-2.8 2.8 2.8-2.8 2.8z" fill="#4f9cf4" stroke="#2a6cd0" stroke-width="0.5"/></svg>
<span class="t" style="left:58.3px;top:138.5px;font-size:13px;letter-spacing:0.22px;color:#000;">Project: project</span>
<div class="doth" style="left:49px;top:170px;width:5px"></div>
<div class="xb" style="left:39px;top:166px"></div>
<svg style="left:54px;top:161px" width="17" height="14" viewBox="0 0 17 14">
<path d="M2.5 1h5l1 1.5h6v2.5h-9.5l-2.5 6z" fill="#f8e8a8" stroke="#c8a850" stroke-width="1"/>
<path d="M5 5h11.5l-2.8 6.5h-11.5z" fill="url(#fg)" stroke="#a88428" stroke-width="1"/>
<g stroke="#000" stroke-width="1.4"><path d="M0 9.5h7M3.5 6v7M1 7l5 5M6 7l-5 5"/></g>
<circle cx="3.5" cy="9.5" r="1.3" fill="#fff" stroke="#000" stroke-width="0.7"/></svg>
<span class="t" style="left:82.3px;top:162.5px;font-size:13px;letter-spacing:0.498px;color:#000;">rtthread-lpc55s6x</span>
<div class="doth" style="left:73px;top:194px;width:9px"></div>
<div class="xb p" style="left:63px;top:190px"></div>
<svg style="left:80px;top:185px" width="15" height="12" viewBox="0 0 15 12">
<defs><linearGradient id="fg" x1="0" y1="0" x2="0.3" y2="1"><stop offset="0" stop-color="#fff3c0"/><stop offset="0.55" stop-color="#f6d66a"/><stop offset="1" stop-color="#d9a520"/></linearGradient></defs>
<path d="M0.5 0.5h5l1 2h7v9h-13z" fill="url(#fg)" stroke="#cdb87a" stroke-width="1"/>
<path d="M0.5 11.5h13.5M13.5 3v8.5" stroke="#8a6a20" stroke-width="1" fill="none"/></svg>
<span class="t" style="left:106.3px;top:186.5px;font-size:13px;letter-spacing:-0.115px;color:#000;">Kernel</span>
<div class="doth" style="left:73px;top:218px;width:9px"></div>
<div class="xb p" style="left:63px;top:214px"></div>
<svg style="left:80px;top:209px" width="15" height="12" viewBox="0 0 15 12">
<path d="M0.5 0.5h5l1 2h7v9h-13z" fill="url(#fg)" stroke="#cdb87a" stroke-width="1"/>
<path d="M0.5 11.5h13.5M13.5 3v8.5" stroke="#8a6a20" stroke-width="1" fill="none"/></svg>
<span class="t" style="left:106.3px;top:210.5px;font-size:13px;letter-spacing:0.264px;color:#000;">Applications</span>
<div class="doth" style="left:73px;top:242px;width:9px"></div>
<div class="xb" style="left:63px;top:238px"></div>
<svg style="left:80px;top:233px" width="16" height="12" viewBox="0 0 16 12">
<path d="M0.5 1h5l1 1.5h6.5v2.5h-10l-2.5 6z" fill="#f8e8a8" stroke="#c8a850" stroke-width="1"/>
<path d="M3.2 5h12.3l-2.8 6.5h-12z" fill="url(#fg)" stroke="#a88428" stroke-width="1"/></svg>
<span class="t" style="left:106.3px;top:234.5px;font-size:13px;letter-spacing:0.139px;color:#000;">Drivers</span>
<div class="doth" style="left:97px;top:266px;width:9px"></div>
<div class="xb p" style="left:87px;top:262px"></div>
<svg style="left:105px;top:255px" width="13" height="16" viewBox="0 0 13 16">
<defs><linearGradient id="pg" x1="0" y1="0" x2="1" y2="1"><stop offset="0" stop-color="#ffffff"/><stop offset="0.45" stop-color="#f4f6fd"/><stop offset="1" stop-color="#c3cff0"/></linearGradient>
<pattern id="dz" width="2" height="2" patternUnits="userSpaceOnUse"><rect width="1" height="1" fill="#b4b4b4"/><rect x="1" y="1" width="1" height="1" fill="#b4b4b4"/></pattern></defs>
<path d="M0.5 0.5h7l3.5 3.5v10.5h-10.5z" fill="url(#pg)" stroke="#8e98bc" stroke-width="1"/>
<path d="M11 4v10.5h-10.5" fill="none" stroke="#4e5e94" stroke-width="1"/>
<path d="M7.5 0.5v3.5h3.5z" fill="#f4f6fd" stroke="#5a6a9c" stroke-width="0.9"/>
<path d="M2 2h3l3 4.5-3 4.5h-3z" fill="url(#dz)"/></svg>
<span class="t" style="left:130.3px;top:258.5px;font-size:13px;letter-spacing:0.274px;color:#000;">board.c</span>
<div class="doth" style="left:97px;top:290px;width:9px"></div>
<div class="xb p" style="left:87px;top:286px"></div>
<svg style="left:105px;top:279px" width="13" height="16" viewBox="0 0 13 16">
<path d="M0.5 0.5h7l3.5 3.5v10.5h-10.5z" fill="url(#pg)" stroke="#8e98bc" stroke-width="1"/>
<path d="M11 4v10.5h-10.5" fill="none" stroke="#4e5e94" stroke-width="1"/>
<path d="M7.5 0.5v3.5h3.5z" fill="#f4f6fd" stroke="#5a6a9c" stroke-width="0.9"/>
<path d="M2 2h3l3 4.5-3 4.5h-3z" fill="url(#dz)"/></svg>
<span class="t" style="left:130.3px;top:282.5px;font-size:13px;letter-spacing:-0.05px;color:#000;">clock_config.c</span>
<div class="doth" style="left:97px;top:314px;width:9px"></div>
<div class="xb p" style="left:87px;top:310px"></div>
<svg style="left:105px;top:303px" width="13" height="16" viewBox="0 0 13 16">
<path d="M0.5 0.5h7l3.5 3.5v10.5h-10.5z" fill="url(#pg)" stroke="#8e98bc" stroke-width="1"/>
<path d="M11 4v10.5h-10.5" fill="none" stroke="#4e5e94" stroke-width="1"/>
<path d="M7.5 0.5v3.5h3.5z" fill="#f4f6fd" stroke="#5a6a9c" stroke-width="0.9"/>
<path d="M2 2h3l3 4.5-3 4.5h-3z" fill="url(#dz)"/></svg>
<span class="t" style="left:130.3px;top:306.5px;font-size:13px;letter-spacing:0.094px;color:#000;">pin_mux.c</span>
<div class="doth" style="left:97px;top:338px;width:9px"></div>
<div class="xb p" style="left:87px;top:334px"></div>
<svg style="left:105px;top:327px" width="13" height="16" viewBox="0 0 13 16">
<path d="M0.5 0.5h7l3.5 3.5v10.5h-10.5z" fill="url(#pg)" stroke="#8e98bc" stroke-width="1"/>
<path d="M11 4v10.5h-10.5" fill="none" stroke="#4e5e94" stroke-width="1"/>
<path d="M7.5 0.5v3.5h3.5z" fill="#f4f6fd" stroke="#5a6a9c" stroke-width="0.9"/>
<path d="M2 2h3l3 4.5-3 4.5h-3z" fill="url(#dz)"/></svg>
<span class="t" style="left:130.3px;top:330.5px;font-size:13px;letter-spacing:0.157px;color:#000;">drv_pin.c</span>
<div class="doth" style="left:97px;top:362px;width:9px"></div>
<div class="xb p" style="left:87px;top:358px"></div>
<svg style="left:105px;top:351px" width="13" height="16" viewBox="0 0 13 16">
<path d="M0.5 0.5h7l3.5 3.5v10.5h-10.5z" fill="url(#pg)" stroke="#8e98bc" stroke-width="1"/>
<path d="M11 4v10.5h-10.5" fill="none" stroke="#4e5e94" stroke-width="1"/>
<path d="M7.5 0.5v3.5h3.5z" fill="#f4f6fd" stroke="#5a6a9c" stroke-width="0.9"/>
<path d="M2 2h3l3 4.5-3 4.5h-3z" fill="url(#dz)"/></svg>
<span class="t" style="left:130.3px;top:354.5px;font-size:13px;letter-spacing:0.032px;color:#000;">drv_led.c</span>
<div class="doth" style="left:97px;top:386px;width:9px"></div>
<div class="xb p" style="left:87px;top:382px"></div>
<svg style="left:105px;top:375px" width="13" height="16" viewBox="0 0 13 16">
<path d="M0.5 0.5h7l3.5 3.5v10.5h-10.5z" fill="url(#pg)" stroke="#8e98bc" stroke-width="1"/>
<path d="M11 4v10.5h-10.5" fill="none" stroke="#4e5e94" stroke-width="1"/>
<path d="M7.5 0.5v3.5h3.5z" fill="#f4f6fd" stroke="#5a6a9c" stroke-width="0.9"/>
<path d="M2 2h3l3 4.5-3 4.5h-3z" fill="url(#dz)"/></svg>
<span class="t" style="left:130.3px;top:378.5px;font-size:13px;letter-spacing:0.245px;color:#000;">drv_uart.c</span>
<div class="doth" style="left:97px;top:410px;width:9px"></div>
<div class="xb p" style="left:87px;top:406px"></div>
<svg style="left:105px;top:399px" width="13" height="16" viewBox="0 0 13 16">
<path d="M0.5 0.5h7l3.5 3.5v10.5h-10.5z" fill="url(#pg)" stroke="#8e98bc" stroke-width="1"/>
<path d="M11 4v10.5h-10.5" fill="none" stroke="#4e5e94" stroke-width="1"/>
<path d="M7.5 0.5v3.5h3.5z" fill="#f4f6fd" stroke="#5a6a9c" stroke-width="0.9"/>
<path d="M2 2h3l3 4.5-3 4.5h-3z" fill="url(#dz)"/></svg>
<span class="t" style="left:130.3px;top:402.5px;font-size:13px;letter-spacing:0.145px;color:#000;">drv_rtc.c</span>
<div class="doth" style="left:97px;top:434px;width:9px"></div>
<div class="xb p" style="left:87px;top:430px"></div>
<svg style="left:105px;top:423px" width="13" height="16" viewBox="0 0 13 16">
<path d="M0.5 0.5h7l3.5 3.5v10.5h-10.5z" fill="url(#pg)" stroke="#8e98bc" stroke-width="1"/>
<path d="M11 4v10.5h-10.5" fill="none" stroke="#4e5e94" stroke-width="1"/>
<path d="M7.5 0.5v3.5h3.5z" fill="#f4f6fd" stroke="#5a6a9c" stroke-width="0.9"/>
<path d="M2 2h3l3 4.5-3 4.5h-3z" fill="url(#dz)"/></svg>
<span class="t" style="left:130.3px;top:426.5px;font-size:13px;letter-spacing:-0.04px;color:#000;">drv_spi.c</span>
<div class="doth" style="left:97px;top:458px;width:9px"></div>
<div class="xb p" style="left:87px;top:454px"></div>
<svg style="left:105px;top:447px" width="13" height="16" viewBox="0 0 13 16">
<path d="M0.5 0.5h7l3.5 3.5v10.5h-10.5z" fill="url(#pg)" stroke="#8e98bc" stroke-width="1"/>
<path d="M11 4v10.5h-10.5" fill="none" stroke="#4e5e94" stroke-width="1"/>
<path d="M7.5 0.5v3.5h3.5z" fill="#f4f6fd" stroke="#5a6a9c" stroke-width="0.9"/>
<path d="M2 2h3l3 4.5-3 4.5h-3z" fill="url(#dz)"/></svg>
<span class="t" style="left:130.3px;top:450.5px;font-size:13px;letter-spacing:-0.018px;color:#000;">drv_sd.c</span>
<div class="doth" style="left:97px;top:482px;width:9px"></div>
<div class="xb p" style="left:87px;top:478px"></div>
<svg style="left:105px;top:471px" width="13" height="16" viewBox="0 0 13 16">
<path d="M0.5 0.5h7l3.5 3.5v10.5h-10.5z" fill="url(#pg)" stroke="#8e98bc" stroke-width="1"/>
<path d="M11 4v10.5h-10.5" fill="none" stroke="#4e5e94" stroke-width="1"/>
<path d="M7.5 0.5v3.5h3.5z" fill="#f4f6fd" stroke="#5a6a9c" stroke-width="0.9"/>
<path d="M2 2h3l3 4.5-3 4.5h-3z" fill="url(#dz)"/></svg>
<span class="t" style="left:130.3px;top:474.5px;font-size:13px;letter-spacing:-0.04px;color:#000;">drv_i2c.c</span>
<div class="doth" style="left:97px;top:506px;width:9px"></div>
<div class="xb p" style="left:87px;top:502px"></div>
<svg style="left:105px;top:495px" width="13" height="16" viewBox="0 0 13 16">
<path d="M0.5 0.5h7l3.5 3.5v10.5h-10.5z" fill="url(#pg)" stroke="#8e98bc" stroke-width="1"/>
<path d="M11 4v10.5h-10.5" fill="none" stroke="#4e5e94" stroke-width="1"/>
<path d="M7.5 0.5v3.5h3.5z" fill="#f4f6fd" stroke="#5a6a9c" stroke-width="0.9"/>
<path d="M2 2h3l3 4.5-3 4.5h-3z" fill="url(#dz)"/></svg>
<span class="t" style="left:130.3px;top:498.5px;font-size:13px;letter-spacing:0.375px;color:#000;">drv_mma8562.c</span>
<div class="doth" style="left:97px;top:530px;width:9px"></div>
<div class="xb p" style="left:87px;top:526px"></div>
<svg style="left:105px;top:519px" width="13" height="16" viewBox="0 0 13 16">
<path d="M0.5 0.5h7l3.5 3.5v10.5h-10.5z" fill="url(#pg)" stroke="#8e98bc" stroke-width="1"/>
<path d="M11 4v10.5h-10.5" fill="none" stroke="#4e5e94" stroke-width="1"/>
<path d="M7.5 0.5v3.5h3.5z" fill="#f4f6fd" stroke="#5a6a9c" stroke-width="0.9"/>
<path d="M2 2h3l3 4.5-3 4.5h-3z" fill="url(#dz)"/></svg>
<span class="t" style="left:130.3px;top:522.5px;font-size:13px;letter-spacing:-0.07px;color:#000;">drv_adc.c</span>
<div class="doth" style="left:97px;top:554px;width:9px"></div>
<div class="xb p" style="left:87px;top:550px"></div>
<svg style="left:105px;top:543px" width="13" height="16" viewBox="0 0 13 16">
<path d="M0.5 0.5h7l3.5 3.5v10.5h-10.5z" fill="url(#pg)" stroke="#8e98bc" stroke-width="1"/>
<path d="M11 4v10.5h-10.5" fill="none" stroke="#4e5e94" stroke-width="1"/>
<path d="M7.5 0.5v3.5h3.5z" fill="#f4f6fd" stroke="#5a6a9c" stroke-width="0.9"/>
<path d="M2 2h3l3 4.5-3 4.5h-3z" fill="url(#dz)"/></svg>
<span class="t" style="left:130.3px;top:546.5px;font-size:13px;letter-spacing:0.401px;color:#000;">drv_hwtimer.c</span>
<div class="doth" style="left:97px;top:578px;width:9px"></div>
<div class="xb p" style="left:87px;top:574px"></div>
<svg style="left:105px;top:567px" width="13" height="16" viewBox="0 0 13 16">
<path d="M0.5 0.5h7l3.5 3.5v10.5h-10.5z" fill="url(#pg)" stroke="#8e98bc" stroke-width="1"/>
<path d="M11 4v10.5h-10.5" fill="none" stroke="#4e5e94" stroke-width="1"/>
<path d="M7.5 0.5v3.5h3.5z" fill="#f4f6fd" stroke="#5a6a9c" stroke-width="0.9"/>
<path d="M2 2h3l3 4.5-3 4.5h-3z" fill="url(#dz)"/></svg>
<span class="t" style="left:130.3px;top:570.5px;font-size:13px;letter-spacing:0.244px;color:#000;">drv_pwm.c</span>
<div class="doth" style="left:73px;top:602px;width:9px"></div>
<div class="xb p" style="left:63px;top:598px"></div>
<svg style="left:80px;top:593px" width="15" height="12" viewBox="0 0 15 12">
<path d="M0.5 0.5h5l1 2h7v9h-13z" fill="url(#fg)" stroke="#cdb87a" stroke-width="1"/>
<path d="M0.5 11.5h13.5M13.5 3v8.5" stroke="#8a6a20" stroke-width="1" fill="none"/></svg>
<span class="t" style="left:106.3px;top:594.5px;font-size:13px;letter-spacing:0.521px;color:#000;">cpu</span>
<div class="doth" style="left:73px;top:626px;width:9px"></div>
<div class="xb p" style="left:63px;top:622px"></div>
<svg style="left:80px;top:617px" width="15" height="12" viewBox="0 0 15 12">
<path d="M0.5 0.5h5l1 2h7v9h-13z" fill="url(#fg)" stroke="#cdb87a" stroke-width="1"/>
<path d="M0.5 11.5h13.5M13.5 3v8.5" stroke="#8a6a20" stroke-width="1" fill="none"/></svg>
<span class="t" style="left:106.3px;top:618.5px;font-size:13px;letter-spacing:0.043px;color:#000;">Filesystem</span>
<div class="abs" style="left:81px;top:641px;width:5px;height:1px;background:#c8b070"></div>
<div class="tabbar" style="left:4px;top:643px;width:341px;height:27px;border-top:1px solid #000"></div>
<div class="atab" style="left:6px;top:643px;width:76px;height:27px"></div>
<svg style="left:11px;top:647px" width="18" height="16" viewBox="0 0 18 16" ><defs><linearGradient id="wtb" x1="0" y1="0" x2="1" y2="0"><stop offset="0" stop-color="#4a7ae0"/><stop offset="1" stop-color="#a8c8f8"/></linearGradient><linearGradient id="wbd" x1="0" y1="0" x2="1" y2="1"><stop offset="0" stop-color="#fff"/><stop offset="0.6" stop-color="#fff"/><stop offset="1" stop-color="#b8c8f0"/></linearGradient></defs><rect x="0.5" y="0.5" width="17" height="15" fill="url(#wbd)" stroke="#3a4a90"/><path d="M17.5 3v12.5h-15" fill="none" stroke="#1c2c60" stroke-width="1"/><rect x="1" y="1" width="16" height="3" fill="url(#wtb)"/><path d="M3.5 5.5v8.5" stroke="#e4e850" stroke-width="1"/><path d="M5.5 6v7.5" stroke="#606060" stroke-width="1.4" fill="none"/><path d="M6 7.5h8M6 10h8M6 12.5h8" stroke="#d0d400" stroke-width="1.1"/><path d="M6 7.5h2M6 10h2M6 12.5h2" stroke="#707020" stroke-width="1"/></svg>
<span class="t" style="left:32.5px;top:649.5px;font-size:13px;letter-spacing:-0.16px;color:#000;">Project</span>
<svg style="left:86px;top:646px" width="20" height="20" viewBox="0 0 20 20" ><path d="M1 8l8-7 7.5 3.5-8 8z" fill="#9a80e8" stroke="#6a20e0" stroke-width="1.3"/><path d="M1 8l1.5 3 7.5 4 7.5-8-1-2.5" fill="#f0ecff" stroke="#6a20e0" stroke-width="1.2"/><circle cx="11.5" cy="12.5" r="6" fill="#3a5ad0"/><circle cx="11.5" cy="12.5" r="4.2" fill="#e8f0ff"/><circle cx="10.3" cy="11" r="2.5" fill="#fff"/><text x="9" y="16.3" font-size="9.5" font-weight="bold" fill="#2038a8" font-family="Liberation Sans,sans-serif">?</text></svg>
<span class="t" style="left:108px;top:649.5px;font-size:13px;letter-spacing:-0.357px;color:#7c7c84;">Books</span>
<div class="abs" style="left:151px;top:647px;width:1px;height:19px;background:#5a5a5a"></div>
<span class="t" style="left:159.5px;top:645.5px;font-size:16px;letter-spacing:2px;line-height:18px">{}</span>
<span class="t" style="left:178.3px;top:649.5px;font-size:13px;letter-spacing:-0.37px;color:#7c7c84;">Functions</span>
<div class="abs" style="left:244px;top:647px;width:1px;height:19px;background:#5a5a5a"></div>
<svg style="left:250px;top:647px" width="20" height="20" viewBox="0 0 20 20" ><path d="M3.5 1.5h-2.5v13h2.5M6 1.5h2.5v13h-2.5" fill="none" stroke="#000" stroke-width="2"/><path d="M10 14.5h8" stroke="#2a50e0" stroke-width="2.2"/><path d="M14.5 10l5 4.5-5 4.5z" fill="#2a50e0"/></svg>
<span class="t" style="left:272.4px;top:649.5px;font-size:13px;letter-spacing:-0.156px;color:#7c7c84;">Templates</span>
<div class="abs" style="left:341px;top:647px;width:1px;height:19px;background:#5a5a5a"></div>
<div class="hdr" style="left:4px;top:676px;width:1214px;height:24px"></div>
<span class="t" style="left:8px;top:681px;font-size:13px;letter-spacing:0.042px;color:#000;">Build Output</span>
<svg style="left:1184px;top:684px" width="28" height="11" viewBox="0 0 28 11" ><path d="M2.5 0.5h6v6.5h-6z" fill="none" stroke="#000" stroke-width="1"/><path d="M7.5 0.5v6.5" stroke="#000" stroke-width="2"/><path d="M0 7h10" stroke="#000" stroke-width="1.4"/><path d="M5 7.5v3.5" stroke="#000" stroke-width="1.2"/><path d="M18.5 0.5l9 8.5M27.5 0.5l-9 8.5" stroke="#000" stroke-width="1.8" fill="none"/></svg>
<div class="abs" style="left:4px;top:702px;width:1214px;height:217px;border:1px solid #808080;border-bottom:none"></div>
<div class="sunk" style="left:7px;top:705px;width:1209px;height:214px"></div>
<div class="checker" style="left:1193px;top:707px;width:20px;height:189px"></div>
<div class="sbtn" style="left:1193px;top:707px;width:20px;height:20px"><div class="abs" style="left:4px;top:6px;width:0;height:0;border-style:solid;border-width:0 4.5px 5px 4.5px;border-color:transparent transparent #000 transparent"></div></div>
<div class="sbtn" style="left:1193px;top:865px;width:20px;height:11px"></div>
<div class="sbtn" style="left:1193px;top:876px;width:20px;height:20px"><div class="abs" style="left:4px;top:7px;width:0;height:0;border-style:solid;border-width:5px 4.5px 0 4.5px;border-color:#000 transparent transparent transparent"></div></div>
<div class="checker" style="left:9px;top:896px;width:1184px;height:20px"></div>
<div class="abs" style="left:1193px;top:896px;width:21px;height:21px;background:#d4d0c8"></div>
<div class="sbtn" style="left:9px;top:896px;width:20px;height:20px"><div class="abs" style="left:5px;top:4px;width:0;height:0;border-style:solid;border-width:4.5px 5px 4.5px 0;border-color:transparent #808080 transparent transparent"></div></div>
<div class="sbtn" style="left:1173px;top:896px;width:20px;height:20px"><div class="abs" style="left:7px;top:4px;width:0;height:0;border-style:solid;border-width:4.5px 0 4.5px 5px;border-color:transparent transparent transparent #808080"></div></div>
<pre style="left:11px;top:708px">compiling fsl_sdmmc_event.c...
compiling fsl_sd.c...
compiling fsl_sdmmc_host.c...
linking...
.\board\linker_scripts\LPC55S69_cm33_core0_flash_mdk.scf(35): warning: L6314W: No section matches pattern *(m_usb_bdt).
.\board\linker_scripts\LPC55S69_cm33_core0_flash_mdk.scf(39): warning: L6314W: No section matches pattern *(m_usb_global).
.\board\linker_scripts\LPC55S69_cm33_core0_flash_mdk.scf(45): warning: L6314W: No section matches pattern *(M0CODE).
Program Size: Code=156704 RO-data=19232 RW-data=1736 ZI-data=16264
Finished: 0 information, 3 warning and 0 error messages.
".\build\rtthread-lpc55s6x.axf" - 0 Error(s), 3 Warning(s).
Build Time Elapsed:  00:00:42</pre>
<div class="tabbar" style="left:4px;top:919px;width:1214px;height:28px;border-top:1px solid #000"></div>
<div class="atab" style="left:7px;top:919px;width:112px;height:27px"></div>
<svg style="left:11px;top:923px" width="18" height="16" viewBox="0 0 18 16" ><rect x="0.5" y="0.5" width="17" height="15" fill="url(#wbd)" stroke="#3a4a90"/><path d="M17.5 3v12.5h-15" fill="none" stroke="#1c2c60" stroke-width="1"/><rect x="1" y="1" width="16" height="3" fill="url(#wtb)"/><path d="M3.5 6.5h4M9 6.5h5M3.5 9h4M9 9h4M3.5 11.5h3" stroke="#404040" stroke-width="1"/></svg>
<span class="t" style="left:32.5px;top:925.5px;font-size:13px;letter-spacing:-0.031px;color:#000;">Build Output</span>
<svg style="left:124px;top:923px" width="18" height="16" viewBox="0 0 18 16" ><rect x="0.5" y="0.5" width="17" height="15" fill="url(#wbd)" stroke="#3a4a90"/><path d="M17.5 3v12.5h-15" fill="none" stroke="#1c2c60" stroke-width="1"/><rect x="1" y="1" width="16" height="3" fill="url(#wtb)"/><g fill="#282828"><rect x="8.5" y="9.5" width="3" height="6" rx="1"/><rect x="14" y="9.5" width="3" height="6" rx="1"/><rect x="11" y="11" width="3.5" height="2.5"/><rect x="8" y="13" width="4" height="6" rx="1.2"/><rect x="13.5" y="13" width="4" height="6" rx="1.2"/></g><path d="M9.5 14v4M15 14v4" stroke="#909090" stroke-width="0.8"/></svg>
<span class="t" style="left:145.3px;top:925.5px;font-size:13px;letter-spacing:-0.366px;color:#7c7c84;">Find In Files</span>
<div class="abs" style="left:226px;top:923px;width:1px;height:19px;background:#5a5a5a"></div>
<span class="t" style="left:8px;top:953px;font-size:13px;letter-spacing:0.024px;color:#000;">Install or update Software Packs that contain Software Components</span>
<div class="sbox" style="left:434px;width:300px"></div>
<div class="sbox" style="left:735px;width:203px"></div>
<span class="t" style="left:738px;top:953px;font-size:13px;letter-spacing:-0.135px;color:#000;">CMSIS-DAP ARMv8-M Debugger</span>
<div class="sbox" style="left:950px;width:142px"></div>
<div class="sbox" style="left:1093px;width:105px"></div>
<svg style="left:1205px;top:957px" width="13" height="13" viewBox="0 0 13 13" ><path d="M12.5 1.5l-11 11M12.5 5.5l-7 7M12.5 9.5l-3 3" stroke="#808080" stroke-width="1.3"/><path d="M12.5 0.5l-12 12M12.5 4.5l-8 8M12.5 8.5l-4 4" stroke="#fff" stroke-width="0.9"/></svg>
<svg style="left:0;top:0" width="1222" height="974" viewBox="0 0 1222 974">
<rect x="53" y="78" width="34" height="28.7" rx="0.7" fill="none" stroke="#ff8228" stroke-width="4" stroke-linejoin="round"/>
<rect x="140" y="78" width="34" height="28.7" rx="0.7" fill="none" stroke="#ff8228" stroke-width="4" stroke-linejoin="round"/>
<rect x="65.5" y="470.5" width="222.5" height="45.7" fill="none" stroke="#ff8228" stroke-width="3"/>
<path d="M6.5 889V679.5H1146V887.5H8" fill="none" stroke="#ff8228" stroke-width="3"/>
<line x1="300.5" y1="345.5" x2="80.2" y2="122.5" stroke="#ff8228" stroke-width="3"/><polygon points="68.5,110.7 87.1,118.4 76,129.4" fill="#ff8228"/>
<line x1="333.5" y1="274.5" x2="184.4" y2="120.7" stroke="#ff8228" stroke-width="3"/><polygon points="172.8,108.8 191.3,116.7 180.1,127.6" fill="#ff8228"/>
<line x1="553" y1="502.3" x2="270.8" y2="502.3" stroke="#ff8228" stroke-width="3"/><polygon points="255.3,502.3 272.8,494.3 272.8,510.3" fill="#ff8228"/>
<line x1="1069.5" y1="545.7" x2="717.4" y2="715.7" stroke="#ff8228" stroke-width="3"/><polygon points="703,722.7 715.7,707.7 722.7,722.1" fill="#ff8228"/>
<text transform="translate(163.3,197.5) rotate(45.4)" fill="#ff8228" font-size="18.67" font-family="Liberation Sans,Noto Serif CJK SC,sans-serif"><tspan font-weight="bold" font-size="19">1.</tspan><tspan font-family="Noto Serif CJK SC,serif" font-weight="300" letter-spacing="0" dx="4.5">点击编译</tspan></text>
<text transform="translate(216.5,146.5) rotate(45.9)" fill="#ff8228" font-size="18.67" font-family="Liberation Sans,Noto Serif CJK SC,sans-serif"><tspan font-weight="bold" font-size="19">3.</tspan><tspan font-family="Noto Serif CJK SC,serif" font-weight="300" letter-spacing="0.3" dx="6">点击下载程序</tspan></text>
<text transform="translate(831.3,653.3) rotate(-25.8)" fill="#ff8228" font-size="18.67" font-family="Liberation Sans,Noto Serif CJK SC,sans-serif"><tspan font-weight="bold" font-size="19">2.</tspan><tspan font-family="Noto Serif CJK SC,serif" font-weight="300" letter-spacing="0.3" dx="6">等待编译完成</tspan></text>
<text x="294" y="497" fill="#ff8228" font-size="18" font-family="Liberation Sans,sans-serif" font-weight="bold" letter-spacing="0.65">MMA8562</text>
<text x="382" y="497.5" fill="#ff8228" font-size="18" font-family="Noto Serif CJK SC,serif" font-weight="300" letter-spacing="0.9">传感器的驱动程序</text>
</svg>
</body>
</html>
